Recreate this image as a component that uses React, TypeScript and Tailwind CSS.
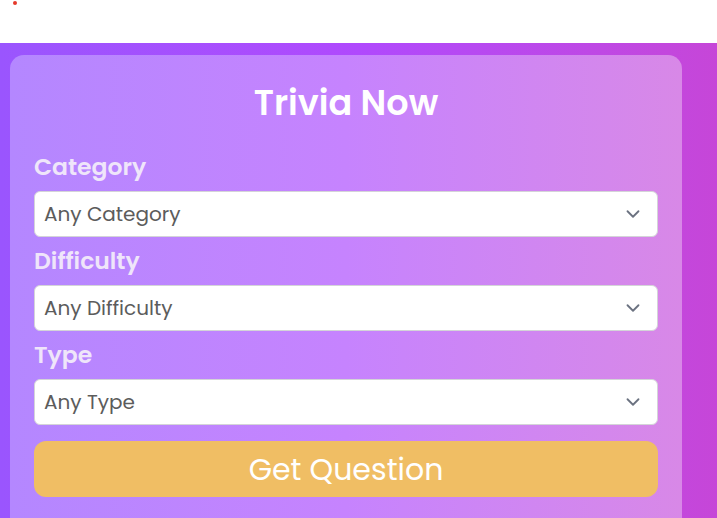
import { ChevronDown } from 'lucide-react';

const font = { fontFamily: 'Poppins, "Open Sans", sans-serif' };

function Field({ label, value }: { label: string; value: string }) {
  return (
    <div className="flex flex-col">
      <div className="h-[48px] flex items-end pb-[13px] text-[23.5px] leading-none font-semibold text-[#efe5fa]">
        {label}
      </div>
      <div className="h-[46px] flex items-center justify-between rounded-[6px] border border-[#d4d4d8] bg-white pl-[9px] pr-[13px]">
        <span className="text-[20px] text-[#5c5c5c]">{value}</span>
        <ChevronDown size={22} strokeWidth={2} className="text-[#6b7280]" />
      </div>
    </div>
  );
}

export default function App() {
  return (
    <div className="w-[717px] h-[518px] overflow-hidden bg-white" style={font}>
      <div className="h-[43px] pl-[13px] pt-[1px]">
        <div className="w-[4px] h-[4px] rounded-full bg-[#e5392b]" />
      </div>
      <div className="h-[475px] bg-gradient-to-r from-[#9a55fe] via-[#b049fd] to-[#c646d8] pt-[12px] pl-[10px]">
        <div className="w-[672px] h-[500px] rounded-[14px] bg-gradient-to-r from-[#b487ff] via-[#c683fe] to-[#d888e7] px-[24px]">
          <h1 className="pt-[30px] h-[88px] text-center text-[35px] leading-none font-semibold text-white">
            Trivia Now
          </h1>
          <Field label="Category" value="Any Category" />
          <Field label="Difficulty" value="Any Difficulty" />
          <Field label="Type" value="Any Type" />
          <button className="mt-[16px] w-full h-[56px] rounded-[12px] bg-[#f0be64] text-[30px] text-white">
            Get Question
          </button>
        </div>
      </div>
    </div>
  );
}
